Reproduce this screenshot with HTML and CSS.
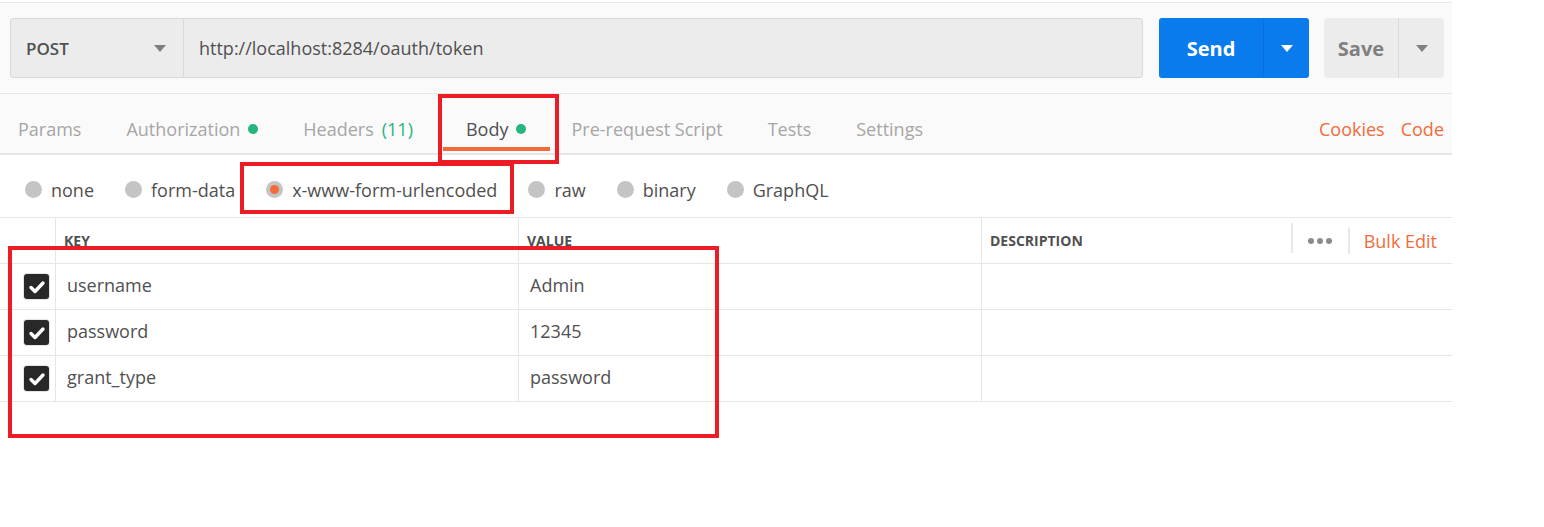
FILE: index.html
```html
<!DOCTYPE html>
<html>
<head>
<meta charset="utf-8">
<link rel="stylesheet" href="styles.css">
</head>
<body>
<div class="app">
  <div class="topbar">
    <div class="urlgroup">
      <div class="method"><span>POST</span><span class="caret dark"></span></div>
      <div class="url">http://localhost:8284/oauth/token</div>
    </div>
    <div class="send"><span class="send-label">Send</span><span class="send-drop"><span class="caret white"></span></span></div>
    <div class="save"><span class="save-label">Save</span><span class="save-drop"><span class="caret dark"></span></span></div>
  </div>

  <div class="tabs">
    <div class="tablist">
      <span class="tab">Params</span>
      <span class="tab">Authorization <i class="dot"></i></span>
      <span class="tab">Headers <em class="count">(11)</em></span>
      <span class="tab active">Body <i class="dot"></i></span>
      <span class="tab">Pre-request Script</span>
      <span class="tab">Tests</span>
      <span class="tab">Settings</span>
    </div>
    <div class="tablinks">
      <span class="link">Cookies</span>
      <span class="link">Code</span>
    </div>
    <div class="mark mark-tab"></div>
  </div>

  <div class="radios">
    <label class="radio"><i class="circle"></i>none</label>
    <label class="radio"><i class="circle"></i>form-data</label>
    <label class="radio"><i class="circle on"></i>x-www-form-urlencoded</label>
    <label class="radio"><i class="circle"></i>raw</label>
    <label class="radio"><i class="circle"></i>binary</label>
    <label class="radio"><i class="circle"></i>GraphQL</label>
    <div class="mark mark-radio"></div>
  </div>

  <div class="table">
    <div class="row head">
      <div class="cell check"></div>
      <div class="cell">KEY</div>
      <div class="cell">VALUE</div>
      <div class="cell desc">
        <span>DESCRIPTION</span>
        <span class="tools">
          <span class="sep tall"></span>
          <span class="dots"><i></i><i></i><i></i></span>
          <span class="sep"></span>
          <span class="bulk">Bulk Edit</span>
        </span>
      </div>
    </div>
    <div class="row">
      <div class="cell check"><span class="box"><svg viewBox="0 0 24 24" width="24" height="24"><path d="M6 12.5l4 4 8-8.5" fill="none" stroke="#fff" stroke-width="3.4" stroke-linecap="round" stroke-linejoin="round"/></svg></span></div>
      <div class="cell val">username</div>
      <div class="cell val">Admin</div>
      <div class="cell"></div>
    </div>
    <div class="row">
      <div class="cell check"><span class="box"><svg viewBox="0 0 24 24" width="24" height="24"><path d="M6 12.5l4 4 8-8.5" fill="none" stroke="#fff" stroke-width="3.4" stroke-linecap="round" stroke-linejoin="round"/></svg></span></div>
      <div class="cell val">password</div>
      <div class="cell val">12345</div>
      <div class="cell"></div>
    </div>
    <div class="row">
      <div class="cell check"><span class="box"><svg viewBox="0 0 24 24" width="24" height="24"><path d="M6 12.5l4 4 8-8.5" fill="none" stroke="#fff" stroke-width="3.4" stroke-linecap="round" stroke-linejoin="round"/></svg></span></div>
      <div class="cell val">grant_type</div>
      <div class="cell val">password</div>
      <div class="cell"></div>
    </div>
    <div class="mark mark-table"></div>
  </div>
</div>
</body>
</html>
```
FILE: styles.css
```css
* { box-sizing: border-box; }
html, body { margin: 0; padding: 0; background: #fff; }
body { font-family: "Open Sans", "Noto Sans", sans-serif; color: #505050; }

.app { width: 1452px; padding-top: 2px; padding-bottom: 90px; }

.topbar {
  display: flex;
  align-items: stretch;
  background: #fafafa;
  border-top: 1px solid #e8e8e8;
  padding: 15px 8px 15px 10px;
  height: 91px;
}
.urlgroup {
  flex: 1;
  display: flex;
  background: #ececec;
  border: 1px solid #d9d9d9;
  border-radius: 3px;
  margin-right: 16px;
}
.method {
  width: 173px;
  display: flex;
  align-items: center;
  justify-content: space-between;
  padding: 0 17px 0 15px;
  border-right: 1px solid #d9d9d9;
  font-size: 17px;
  font-weight: 600;
  color: #505050;
}
.url {
  display: flex;
  align-items: center;
  padding-left: 15px;
  font-size: 18px;
  color: #505050;
}
.caret {
  width: 0; height: 0;
  border-left: 6px solid transparent;
  border-right: 6px solid transparent;
  border-top: 7px solid #808080;
  display: inline-block;
}
.caret.white { border-top-color: #fff; }

.send {
  width: 150px;
  display: flex;
  background: #097bed;
  border-radius: 3px;
  color: #fff;
  margin-right: 15px;
}
.send-label {
  width: 104px;
  display: flex; align-items: center; justify-content: center;
  font-size: 20px; font-weight: 700;
}
.send-drop {
  flex: 1;
  display: flex; align-items: center; justify-content: center;
  border-left: 1px solid #0a6fd6;
}
.save {
  width: 120px;
  display: flex;
  background: #ececec;
  border-radius: 3px;
  color: #808080;
}
.save-label {
  width: 74px;
  display: flex; align-items: center; justify-content: center;
  font-size: 20px; font-weight: 700;
}
.save-drop {
  flex: 1;
  display: flex; align-items: center; justify-content: center;
  border-left: 1px solid #dadada;
}

.tabs {
  position: relative;
  display: flex;
  justify-content: space-between;
  align-items: center;
  height: 62px;
  background: #fafafa;
  border-top: 1px solid #e6e6e6;
  border-bottom: 2px solid #e6e6e6;
  padding: 0 8px 0 18px;
}
.tablist { display: flex; gap: 45px; height: 100%; align-items: center; }
.tab {
  position: relative;
  font-size: 18px;
  color: #a6a6a6;
  display: flex; align-items: center; gap: 8px;
  padding-top: 10px;
  height: 100%;
}
.tab.active { color: #505050; margin-left: 8px; }
.tab.active::after {
  content: "";
  position: absolute;
  left: -23px; right: -24px;
  bottom: 2px;
  height: 4px;
  background: #f26b3a;
}
.dot { width: 10px; height: 10px; border-radius: 50%; background: #26b47f; display: inline-block; }
.count { font-style: normal; color: #26b47f; margin-left: 0; }
.tablinks { display: flex; gap: 16px; padding-top: 10px; }
.link { color: #f26b3a; font-size: 18px; }

.mark { position: absolute; border: 4px solid #ed1c24; pointer-events: none; z-index: 5; }
.mark-tab { left: 438px; top: 0; width: 121px; height: 70px; }

.radios {
  position: relative;
  display: flex;
  align-items: center;
  height: 62px;
  padding: 7px 0 0 25px;
  gap: 31px;
  background: #fff;
}
.radio {
  display: flex; align-items: center; gap: 9px;
  font-size: 18px; color: #505050;
}
.circle {
  flex: none;
  width: 17px; height: 17px; border-radius: 50%;
  background: #c4c4c4; display: inline-block; position: relative;
}
.circle.on::after {
  content: ""; position: absolute; left: 4px; top: 4px;
  width: 9px; height: 9px; border-radius: 50%; background: #f26b3a;
}
.mark-radio { left: 240px; top: 7px; width: 274px; height: 52px; }

.table {
  position: relative;
  border-top: 1px solid #e6e6e6;
}
.row {
  display: grid;
  grid-template-columns: 55px 463px 463px 1fr;
  height: 46px;
  border-bottom: 1px solid #e6e6e6;
}
.cell {
  display: flex; align-items: center;
  border-left: 1px solid #e6e6e6;
  padding-left: 11px;
  padding-bottom: 3px;
  font-size: 18px;
  color: #505050;
}
.cell.check { border-left: none; padding-left: 24px; padding-bottom: 0; }
.head .cell { font-size: 14px; font-weight: 700; padding-left: 8px; padding-bottom: 0; color: #505050; }
.head .cell.check { padding-left: 0; }
.cell.desc { justify-content: space-between; padding-right: 15px; }
.tools { display: flex; align-items: center; height: 100%; }
.sep { width: 2px; height: 26px; background: #e8e8e8; display: inline-block; }
.sep.tall { height: 30px; margin-top: -6px; }
.dots { display: flex; gap: 3px; margin: 0 16px 0 15px; }
.dots i { width: 6px; height: 6px; border-radius: 50%; background: #8a8a8a; display: inline-block; }
.bulk { color: #f26b3a; font-size: 18px; font-weight: 400; margin-left: 14px; }

.box {
  width: 25px; height: 25px; border-radius: 3px;
  background: #282828;
  box-shadow: 0 0 0 1px #e4e4e4;
  display: flex; align-items: center; justify-content: center;
}
.box svg { display: block; }

.mark-table { left: 8px; top: 28px; width: 711px; height: 192px; }
```
